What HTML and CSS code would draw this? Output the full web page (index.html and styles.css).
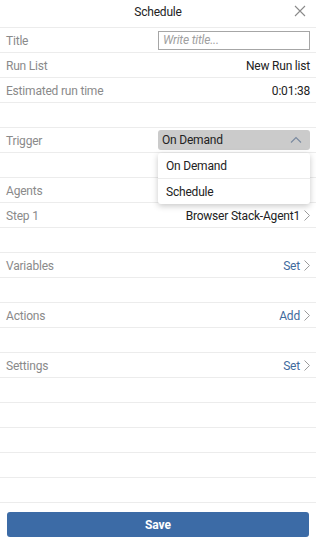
FILE: index.html
```html
<!DOCTYPE html>
<html lang="en">
<head>
    <meta charset="UTF-8">
    <meta name="viewport" content="width=device-width, initial-scale=1.0">
    <title>Schedule</title>
    <link rel="stylesheet" href="styles.css">
</head>
<body>

<div class="panel">
    <!-- Header -->
    <div class="header">
        <span class="header-title">Schedule</span>
        <svg class="close" width="12" height="12" viewBox="0 0 12 12">
            <path d="M1 1L11 11M11 1L1 11" stroke="#8a8a8a" stroke-width="1.1" fill="none"/>
        </svg>
    </div>

    <div class="row">
        <span class="label">Title</span>
        <input class="title-input" type="text" placeholder="Write title...">
    </div>
    <div class="row">
        <span class="label">Run List</span>
        <span class="value">New Run list</span>
    </div>
    <div class="row">
        <span class="label">Estimated run time</span>
        <span class="value">0:01:38</span>
    </div>
    <div class="row"></div>

    <!-- Trigger with open dropdown -->
    <div class="row trigger-row">
        <span class="label">Trigger</span>
        <div class="select">
            <span>On Demand</span>
            <svg width="12" height="8" viewBox="0 0 12 8">
                <path d="M1 6.5L6 1.5L11 6.5" stroke="#7a8aa0" stroke-width="1.1" fill="none"/>
            </svg>
        </div>
        <div class="dropdown">
            <div class="option">On Demand</div>
            <div class="option">Schedule</div>
        </div>
    </div>
    <div class="row"></div>

    <div class="row">
        <span class="label">Agents</span>
    </div>
    <div class="row">
        <span class="label">Step 1</span>
        <span class="value">Browser Stack-Agent1 <svg class="chev" width="6" height="11" viewBox="0 0 6 11"><path d="M0.5 0.5L5.5 5.5L0.5 10.5" stroke="#9a9a9a" stroke-width="1" fill="none"/></svg></span>
    </div>
    <div class="row"></div>

    <div class="row">
        <span class="label">Variables</span>
        <span class="value link">Set <svg class="chev" width="6" height="11" viewBox="0 0 6 11"><path d="M0.5 0.5L5.5 5.5L0.5 10.5" stroke="#9a9a9a" stroke-width="1" fill="none"/></svg></span>
    </div>
    <div class="row"></div>
    <div class="row">
        <span class="label">Actions</span>
        <span class="value link">Add <svg class="chev" width="6" height="11" viewBox="0 0 6 11"><path d="M0.5 0.5L5.5 5.5L0.5 10.5" stroke="#9a9a9a" stroke-width="1" fill="none"/></svg></span>
    </div>
    <div class="row"></div>
    <div class="row">
        <span class="label">Settings</span>
        <span class="value link">Set <svg class="chev" width="6" height="11" viewBox="0 0 6 11"><path d="M0.5 0.5L5.5 5.5L0.5 10.5" stroke="#9a9a9a" stroke-width="1" fill="none"/></svg></span>
    </div>
    <div class="row"></div>
    <div class="row"></div>
    <div class="row"></div>
    <div class="row"></div>
    <div class="row"></div>

    <div class="footer">
        <button class="save">Save</button>
    </div>
</div>

</body>
</html>
```

FILE: styles.css
```css
body {
    margin: 0;
    padding: 0;
    font-family: Roboto, 'Liberation Sans', sans-serif;
    font-size: 12px;
    letter-spacing: -0.2px;
    background-color: #fff;
    color: #222;
}
.panel {
    width: 316px;
    height: 545px;
    display: flex;
    flex-direction: column;
}
.header {
    flex-shrink: 0;
    height: 27px;
    border-bottom: 1px solid #ececec;
    display: flex;
    justify-content: center;
    align-items: center;
    position: relative;
}
.header-title {
    color: #222;
    margin-top: -4px;
}
.close {
    position: absolute;
    right: 10px;
    top: 5px;
}
.row {
    flex-shrink: 0;
    height: 23px;
    border-bottom: 1px solid #ececec;
    display: flex;
    align-items: center;
    justify-content: space-between;
    padding: 1px 6px 0 6px;
    position: relative;
}
.row:empty {
    height: 24px;
    padding-top: 0;
}
.label {
    color: #8a8a8a;
}
.value {
    color: #222;
    display: flex;
    align-items: center;
    gap: 4px;
}
.link {
    color: #3f6a9c;
}
.chev {
    margin-top: -1px;
}
.title-input {
    width: 152px;
    height: 19px;
    box-sizing: border-box;
    border: 1px solid #a6a6a6;
    padding: 0 4px;
    font-family: Roboto, 'Liberation Sans', sans-serif;
    font-size: 12px;
    letter-spacing: -0.2px;
    outline: none;
    margin-top: -1px;
}
.title-input::placeholder {
    color: #a0a0a0;
    font-style: italic;
}
.select {
    width: 152px;
    height: 20px;
    box-sizing: border-box;
    background-color: #cbcbcb;
    border-radius: 3px;
    display: flex;
    align-items: center;
    justify-content: space-between;
    padding: 0 8px 0 4px;
    color: #222;
    margin-top: -1px;
}
.dropdown {
    position: absolute;
    left: 158px;
    top: 25px;
    width: 152px;
    background-color: #fff;
    border-radius: 3px;
    box-shadow: 0 2px 6px rgba(0, 0, 0, 0.22);
    z-index: 2;
}
.option {
    height: 25px;
    line-height: 26px;
    padding: 0 8px;
    color: #222;
}
.option + .option {
    border-top: 1px solid #ececec;
}
.footer {
    flex-shrink: 0;
    padding: 9px 7px 8px 7px;
}
.save {
    display: block;
    width: 100%;
    height: 25px;
    border: none;
    border-radius: 3px;
    background-color: #3c6ba6;
    color: #fff;
    font-family: Roboto, 'Liberation Sans', sans-serif;
    font-weight: bold;
    font-size: 12px;
}
```
